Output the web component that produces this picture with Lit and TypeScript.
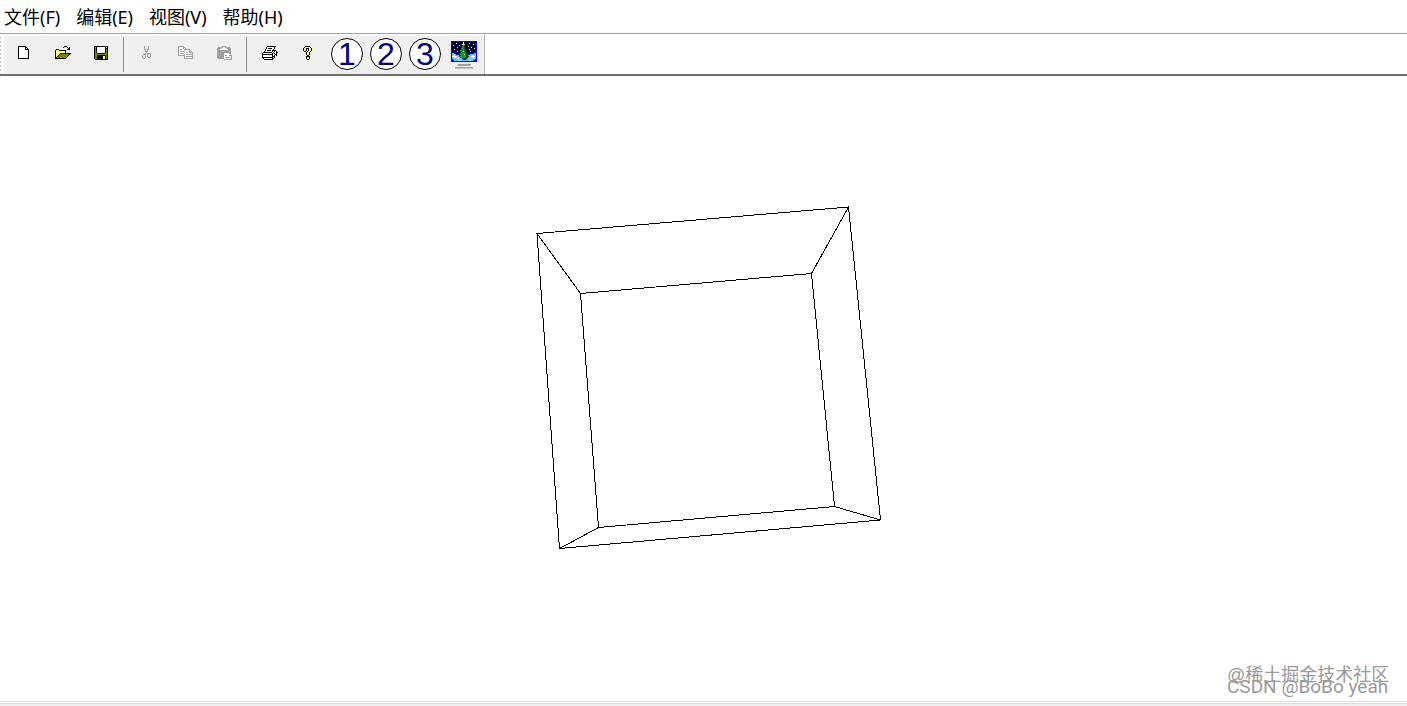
import { LitElement, html, svg, css } from "lit";
import { customElement, property } from "lit/decorators.js";

const PALETTE: Record<string, string> = {
  "#": "#000000",
  w: "#ffffff",
  y: "#ffff7a",
  o: "#808000",
  g: "#a0a0a0",
  s: "#c8c8c8",
  n: "#000034",
  b: "#0000e8",
  c: "#58c8ff",
  t: "#109c30",
  d: "#04541c",
  r: "#e02020",
};

const ICONS: Record<string, string[]> = {
  new: [
    "................",
    "..########......",
    "..#wwwwww##.....",
    "..#wwwwww#w#....",
    "..#wwwwww####...",
    "..#wwwwwwwww#...",
    "..#wwwwwwwww#...",
    "..#wwwwwwwww#...",
    "..#wwwwwwwww#...",
    "..#wwwwwwwww#...",
    "..#wwwwwwwww#...",
    "..#wwwwwwwww#...",
    "..#wwwwwwwww#...",
    "..###########...",
    "................",
  ],
  open: [
    "................",
    ".........###....",
    "........#...#.#.",
    ".............##.",
    ".###........###.",
    "#yyy#######.....",
    "#yyyyyyyyy#.....",
    "#yyyyyyyyy#.....",
    "#yyyy###########",
    "#yyy#ooooooooo#.",
    "#yy#ooooooooo#..",
    "#y#ooooooooo#...",
    "##ooooooooo#....",
    "###########.....",
    "................",
  ],
  save: [
    "................",
    "##############..",
    "#o#wwwwwwww#w#..",
    "#o#wwwwwwww###..",
    "#o#wwwwwwww#o#..",
    "#o#wwwwwwww#o#..",
    "#o#wwwwwwww#o#..",
    "#o#wwwwwwww#o#..",
    "#oo########oo#..",
    "#oooooooooooo#..",
    "#oo#########o#..",
    "#oo######ww#o#..",
    "#oo######ww#o#..",
    "#oo######ww#o#..",
    ".#############..",
  ],
  cut: [
    "................",
    ".....g...g......",
    ".....g...g......",
    ".....g...g......",
    ".....gg.gg......",
    "......g.g.......",
    "......ggg.......",
    ".......g........",
    "......g.ggg.....",
    "....ggg.g..g....",
    "...g..g.g..g....",
    "...g..g.g..g....",
    "...g..g..gg.....",
    "....gg..........",
    "................",
  ],
  copy: [
    "................",
    "gggggg..........",
    "gwwwwgg.........",
    "gwwwwgwg........",
    "gwggwwgggggg....",
    "gwwwwwgwwwwgg...",
    "gwggggwwwwwgwg..",
    "gwwwwwgwggwgggg.",
    "gwggggwwwwwwwwg.",
    "gwwwwwgwggggggg.",
    "gggggggwwwwwwwg.",
    "......gwggggggg.",
    "......gwwwwwwwg.",
    "......ggggggggg.",
    "................",
  ],
  paste: [
    "................",
    ".....gggg.......",
    ".ggggg..ggggg...",
    "ggggswwwwsgggg..",
    "gggwwwwwwwwggg..",
    "gggggggggggggg..",
    "gggggggggggggg..",
    "gggggggggggggg..",
    "gggggggwwwwwgg..",
    "gggggggwwwwwwg..",
    "gggggggwggwwggg.",
    "gggggggwwwwwwwg.",
    "gggggggwgggggwg.",
    ".ggggggwwwwwwwg.",
    ".......gggggggg.",
  ],
  print: [
    "................",
    ".....#########..",
    "....#wwwwwww#...",
    "....#w####ww#...",
    "...#wwwwwww#....",
    "...#w####w####..",
    "..#wwwwwww#w#w#.",
    ".#########w#ww##",
    "#wwwwwwwww#w#w#.",
    "###########ww##.",
    "#wwwwwwyyw#w#w#.",
    "#wwwwwwwww###...",
    "###########w#...",
    ".#wwwwwwww##....",
    "..#########.....",
  ],
  help: [
    "................",
    "....#####.......",
    "...#yyyyy#......",
    "..#yy###yy#.....",
    "..#yy#.#yy#.....",
    "..#yy#.#yy#.....",
    "...##.#yy#......",
    ".....#yy#.......",
    ".....#yy#.......",
    ".....#yy#.......",
    "......##........",
    ".....####.......",
    ".....#yy#.......",
    ".....#yy#.......",
    "......##........",
  ],
  scene: [
    "..........................",
    "bbbbbbbbbbbbbbbbbbbbbbbbbb",
    "bnnnnnnnnnnnwnnnnnnnnnnnnb",
    "bnnnnwnnnnnnynnnnnwnnnnnnb",
    "bnnnnnnnnnnyyynnnnnnnnwnnb",
    "bnwnnnnnwnnntnnnnnnnnnnnnb",
    "bnnnnnnnnnnttdnnnwnnnnnnnb",
    "bnnnnnwnnnnttdnnnnnnwnnnnb",
    "bnnnnnnnnnttrdnnnnnnnnnwnb",
    "bnnwnnnnnndttddnnnwnnnnnnb",
    "bnnnnnnnnttttddnnnnnnnnnnb",
    "bbnnnnwnnnttytdnnnnwnnnnbb",
    "bbbnnnnnndttttddnnnnnnbbbb",
    "bccbbnnnntrtttddbnnbbbbccb",
    "bccccbbbbttttytddbbccccccb",
    "bcwwccccbdtttttddccccwwccb",
    "bwwwwwccttttrttdddccwwwwcb",
    "bccwwccccdttttddbccccwwccb",
    "bcccccwwcccbddbbcccwcccccb",
    "bbccccccccccddbcccccccccbb",
    "bbbccccwwcccccccccwwccbbbb",
    "bbbbbbbbbbbbbbbbbbbbbbbbbb",
    "..........................",
    "..........................",
    ".......ggggggggggggg......",
    "......sggggggggggggs......",
    "..........................",
    "....gggggggggggggggggg....",
    "....sssssssssssssssssss...",
  ],
};

@customElement("pixel-icon")
export class PixelIcon extends LitElement {
  @property() name = "new";

  static styles = css`
    :host { display: block; }
    .art { display: block; shape-rendering: crispEdges; }
  `;

  render() {
    const rows = ICONS[this.name];
    const paths = new Map<string, string>();
    rows.forEach((row, y) =>
      [...row].forEach((ch, x) => {
        if (ch !== ".") paths.set(ch, (paths.get(ch) ?? "") + `M${x} ${y}h1v1h-1z`);
      })
    );
    return html`<svg class="art" width=${rows[0].length} height=${rows.length}
      viewBox="0 0 ${rows[0].length} ${rows.length}" aria-hidden="true">
      ${[...paths].map(([ch, d]) => svg`<path fill=${PALETTE[ch]} d=${d} />`)}
    </svg>`;
  }
}

@customElement("app-root")
export class AppRoot extends LitElement {
  static styles = css`
    :host {
      display: flex;
      flex-direction: column;
      height: 100vh;
      position: relative;
      overflow: hidden;
      background: #ffffff;
      color: #000000;
      font-family: "Noto Sans", "Noto Sans CJK SC", sans-serif;
    }
    button {
      appearance: none;
      border: 0;
      padding: 0;
      background: none;
      color: inherit;
      font-family: inherit;
    }
    .menu {
      display: flex;
      flex: none;
      gap: 16px;
      height: 33px;
      padding: 0 4px;
      align-items: center;
    }
    .menu-item { font-size: 18px; line-height: 24px; }
    .band {
      flex: none;
      display: flex;
      height: 40px;
      border-top: 1px solid #a0a0a0;
      border-bottom: 2px solid #6e6e6e;
    }
    .toolbar {
      display: flex;
      align-items: stretch;
      background: #f0f0f0;
      border-top: 1px solid #ffffff;
      border-right: 1px solid #b4b4b4;
    }
    .grip {
      width: 4px;
      background: repeating-linear-gradient(#ffffff 0 2px, #c8c8c8 2px 4px) left / 1px 100% no-repeat #fafafa;
    }
    .tool {
      width: 39px;
      display: flex;
      justify-content: center;
      align-items: center;
      padding-bottom: 4px;
    }
    .tool.large { padding: 0 1px 1px 0; }
    .rule { width: 1px; margin: 2px 3px 2px 2px; background: #8c8c8c; }
    .number {
      box-sizing: border-box;
      width: 32px;
      height: 32px;
      border: 1px solid #000000;
      border-radius: 50%;
      background: #ffffff;
      color: #000080;
      font: 32px/30px "Liberation Sans", sans-serif;
      text-align: center;
    }
    .view {
      flex: 1;
      min-height: 0;
      display: flex;
      align-items: center;
      justify-content: center;
    }
    .wire {
      display: block;
      fill: none;
      stroke: #000000;
      stroke-width: 1;
      shape-rendering: crispEdges;
    }
    .status {
      flex: none;
      height: 2px;
      margin-top: 1px;
      border-top: 1px solid #dcdcdc;
      background: #f0f0f0;
    }
    .edge {
      flex: none;
      height: 1px;
      background: #e0e0e0;
    }
    .marks {
      position: absolute;
      right: 14px;
      bottom: 14px;
      width: 166px;
      color: #999999;
      white-space: nowrap;
    }
    .mark {
      margin: 0;
      font-family: "Liberation Sans", "Noto Sans CJK SC", sans-serif;
      font-size: 18px;
      line-height: 11px;
    }
    .mark.second { font-family: Roboto, sans-serif; font-size: 19px; }
  `;

  private tool(label: string, icon: string, disabled = false) {
    return html`<button class="tool" aria-label=${label} ?disabled=${disabled}>
      <pixel-icon name=${icon}></pixel-icon>
    </button>`;
  }

  render() {
    return html`
      <nav class="menu">
        ${["文件(F)", "编辑(E)", "视图(V)", "帮助(H)"].map(
          (label) => html`<button class="menu-item">${label}</button>`
        )}
      </nav>
      <div class="band">
        <div class="toolbar" role="toolbar">
          <span class="grip"></span>
          ${this.tool("新建", "new")} ${this.tool("打开", "open")} ${this.tool("保存", "save")}
          <span class="rule"></span>
          ${this.tool("剪切", "cut", true)} ${this.tool("复制", "copy", true)}
          ${this.tool("粘贴", "paste", true)}
          <span class="rule"></span>
          ${this.tool("打印", "print")} ${this.tool("关于", "help")}
          ${[1, 2, 3].map(
            (n) => html`<button class="tool large"><span class="number">${n}</span></button>`
          )}
          <button class="tool large" aria-label="动画"><pixel-icon name="scene"></pixel-icon></button>
        </div>
      </div>
      <main class="view">
        <svg class="wire" width="355" height="365" viewBox="526 206 355 365" role="img" aria-label="立方体">
          <path d="M537 233.500L848.500 207L880.500 520L559.500 548.500Z" />
          <path d="M580.500 293.500L811.500 273.500L834.500 506.500L598.500 527.500Z" />
          <path d="M537 233.500L580.500 293.500M848.500 207L811.500 273.500M880.500 520L834.500 506.500M559.500 548.500L598.500 527.500" />
        </svg>
      </main>
      <div class="edge"></div>
      <div class="status"></div>
      <div class="marks">
        <p class="mark">@稀土掘金技术社区</p>
        <p class="mark second">CSDN @BoBo yeah</p>
      </div>
    `;
  }
}
